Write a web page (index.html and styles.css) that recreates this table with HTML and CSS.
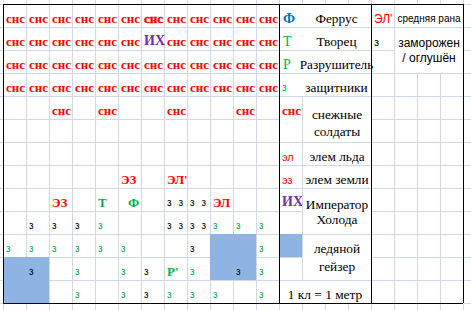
FILE: index.html
```html
<!DOCTYPE html>
<html lang="ru">
<head>
<meta charset="utf-8">
<title>Карта</title>
<link rel="stylesheet" href="styles.css">
</head>
<body>
<div class="sheet">
  <!-- row 0 -->
  <div class="t snc c0 r0">снс</div><div class="t snc c1 r0">снс</div><div class="t snc c2 r0">снс</div><div class="t snc c3 r0">снс</div>
  <div class="t snc c4 r0">снс</div><div class="t snc c5 r0">снс</div><div class="t snc heavy c6 r0">снс</div><div class="t snc c7 r0">снс</div>
  <div class="t snc c8 r0">снс</div><div class="t snc c9 r0">снс</div><div class="t snc c10 r0">снс</div><div class="t snc c11 r0">снс</div>
  <div class="t key blue c12 r0">Ф</div>
  <div class="t lg m ctr c13 r0 w3">Феррус</div>
  <div class="t sans red s12 c16 r0">ЭЛ'</div>
  <div class="t sans s10 m ml ctr c17 r0 w3">средняя рана</div>

  <!-- row 1 -->
  <div class="t snc c0 r1">снс</div><div class="t snc c1 r1">снс</div><div class="t snc c2 r1">снс</div><div class="t snc c3 r1">снс</div>
  <div class="t snc c4 r1">снс</div><div class="t snc c5 r1">снс</div><div class="t ih c6 r1">ИХ</div><div class="t snc c7 r1">снс</div>
  <div class="t snc c8 r1">снс</div><div class="t snc c9 r1">снс</div><div class="t snc c10 r1">снс</div><div class="t snc c11 r1">снс</div>
  <div class="t key green c12 r1">Т</div>
  <div class="t lg m mt ctr c13 r1 w3">Творец</div>
  <div class="t sans s11 c16 r1">з</div>
  <div class="t sans s12 m mt ml ctr mid lh15 c17 r1 w3 h2">заморожен<br>/ оглушён</div>

  <!-- row 2 -->
  <div class="t snc c0 r2">снс</div><div class="t snc c1 r2">снс</div><div class="t snc c2 r2">снс</div><div class="t snc c3 r2">снс</div>
  <div class="t snc c4 r2">снс</div><div class="t snc c5 r2">снс</div><div class="t snc c6 r2">снс</div><div class="t snc c7 r2">снс</div>
  <div class="t snc c8 r2">снс</div><div class="t snc c9 r2">снс</div><div class="t snc c10 r2">снс</div><div class="t snc c11 r2">снс</div>
  <div class="t key green c12 r2">Р</div>
  <div class="t lg m mt ctr c13 r2 w3">Разрушитель</div>

  <!-- row 3 -->
  <div class="t snc c0 r3">снс</div><div class="t snc c1 r3">снс</div><div class="t snc c2 r3">снс</div><div class="t snc c3 r3">снс</div>
  <div class="t snc c4 r3">снс</div><div class="t snc c5 r3">снс</div><div class="t snc c6 r3">снс</div><div class="t snc c7 r3">снс</div>
  <div class="t snc c8 r3">снс</div><div class="t snc c9 r3">снс</div><div class="t snc c10 r3">снс</div><div class="t snc c11 r3">снс</div>
  <div class="t z green c12 r3">з</div>
  <div class="t lg m mt ctr c13 r3 w3">защитники</div>

  <!-- row 4-5 -->
  <div class="t snc c2 r4">снс</div><div class="t snc c4 r4">снс</div><div class="t snc c7 r4">снс</div><div class="t snc c10 r4">снс</div>
  <div class="t snc m mt top c12 r4 h2">снс</div>
  <div class="t lg m mt ml ctr lh165 pb2 c13 r4 w3 h2">снежные<br>солдаты</div>

  <!-- row 6 -->
  <div class="t lab c12 r6">эл</div>
  <div class="t lg m mt ml ctr c13 r6 w3">элем льда</div>

  <!-- row 7 -->
  <div class="t ab c5 r7">ЭЗ</div>
  <div class="t ab c7 r7">ЭЛ'</div>
  <div class="t lab c12 r7">эз</div>
  <div class="t lg m mt ml ctr c13 r7 w3">элем земли</div>

  <!-- row 8 -->
  <div class="t ab c2 r8">ЭЗ</div>
  <div class="t gb c4 r8">Т</div>
  <div class="t gb pf c5 r8">Ф</div>
  <div class="t z zz c7 r8"><span>з</span><span>з</span></div>
  <div class="t z zz c8 r8"><span>з</span><span>з</span></div>
  <div class="t ab c9 r8">ЭЛ</div>
  <div class="t ih c12 r8">ИХ</div>
  <div class="t lg m mt ml ctr mid lh15 c13 r8 w3 h2">Император<br>Холода</div>

  <!-- row 9 -->
  <div class="t z c1 r9">з</div><div class="t z c2 r9">з</div><div class="t z c3 r9">з</div><div class="t z green c4 r9">з</div>
  <div class="t z zz c7 r9"><span>з</span><span>з</span></div>
  <div class="t z zz c8 r9"><span>з</span><span>з</span></div>
  <div class="t z green c9 r9">з</div><div class="t z green c10 r9">з</div><div class="t z green c11 r9">з</div>

  <!-- row 10 -->
  <div class="t z green c0 r10">з</div><div class="t z green c1 r10">з</div><div class="t z green c2 r10">з</div>
  <div class="t z green c3 r10">з</div><div class="t z green c4 r10">з</div><div class="t z green c5 r10">з</div>
  <div class="t z c8 r10">з</div>
  <div class="fill c9 r10 w2 h2"></div>
  <div class="t z green c11 r10">з</div>
  <div class="fill c12 r10"></div>
  <div class="t lg m mt ml ctr mid lh18 c13 r10 w3 h2">ледяной<br>гейзер</div>

  <!-- row 11 -->
  <div class="fill c0 r11 w2 h2"></div>
  <div class="t z c1 r11">з</div>
  <div class="t z green c3 r11">з</div><div class="t z green c5 r11">з</div><div class="t z c6 r11">з</div>
  <div class="t gb c7 r11">Р'</div>
  <div class="t z green c8 r11">з</div>
  <div class="t z c10 r11">з</div>
  <div class="t z green c11 r11">з</div>

  <!-- row 12 -->
  <div class="t z green c3 r12">з</div><div class="t z green c5 r12">з</div><div class="t z c6 r12">з</div>
  <div class="t z green c7 r12">з</div><div class="t z green c8 r12">з</div><div class="t z green c9 r12">з</div>
  <div class="t z green c11 r12">з</div>
  <div class="t lg m mt ctr c12 r12 w4">1 кл = 1 метр</div>

  <!-- thick borders -->
  <div class="vl c0"></div>
  <div class="vl c12"></div>
  <div class="vl c16"></div>
  <div class="vl c20"></div>
  <div class="hl r0"></div>
  <div class="hl r13"></div>
</div>
</body>
</html>
```

FILE: styles.css
```css
* { box-sizing: border-box; }

html, body {
  margin: 0;
  padding: 0;
  background: #fff;
  overflow: hidden;
}

body {
  width: 471px;
  height: 310px;
}

.sheet {
  display: grid;
  grid-template-columns: 3px repeat(20, 23px) 8px;
  grid-template-rows: 4px repeat(13, 23px) 7px;
  width: 471px;
  height: 310px;
  background-color: #fff;
  background-image:
    repeating-linear-gradient(90deg, transparent 0 3px, #D0D7E5 3px 4px, transparent 4px 23px),
    repeating-linear-gradient(180deg, transparent 0 4px, #D0D7E5 4px 5px, transparent 5px 23px);
}

/* placement */
.c0 { grid-column: 2; }  .c1 { grid-column: 3; }  .c2 { grid-column: 4; }  .c3 { grid-column: 5; }
.c4 { grid-column: 6; }  .c5 { grid-column: 7; }  .c6 { grid-column: 8; }  .c7 { grid-column: 9; }
.c8 { grid-column: 10; } .c9 { grid-column: 11; } .c10 { grid-column: 12; } .c11 { grid-column: 13; }
.c12 { grid-column: 14; } .c13 { grid-column: 15; } .c16 { grid-column: 18; } .c17 { grid-column: 19; }
.c20 { grid-column: 22; }

.r0 { grid-row: 2; }  .r1 { grid-row: 3; }  .r2 { grid-row: 4; }  .r3 { grid-row: 5; }
.r4 { grid-row: 6; }  .r5 { grid-row: 7; }  .r6 { grid-row: 8; }  .r7 { grid-row: 9; }
.r8 { grid-row: 10; } .r9 { grid-row: 11; } .r10 { grid-row: 12; } .r11 { grid-row: 13; }
.r12 { grid-row: 14; } .r13 { grid-row: 15; }

.w2 { grid-column-end: span 2; }
.w3 { grid-column-end: span 3; }
.w4 { grid-column-end: span 4; }
.h2 { grid-row-end: span 2; }

/* cells */
.t {
  display: flex;
  align-items: flex-end;
  padding-left: 3px;
  white-space: nowrap;
  line-height: 16px;
  min-width: 0;
}
.ctr { justify-content: center; text-align: center; padding-left: 0; }
.mid { align-items: center; }
.top { align-items: flex-start; padding-top: 6px; }
.pb2 { padding-bottom: 2px; }
.pf { padding-left: 10px; }
.lh15 { line-height: 15px; }
.lh165 { line-height: 16.5px; }
.lh18 { line-height: 18px; }

.m { background-color: #fff; }
.mt { border-top: 1px solid #D0D7E5; }
.ml { border-left: 1px solid #D0D7E5; }
.fill { background-color: #8DB4E2; }

/* text styles */
.snc {
  font-family: "Liberation Serif", serif;
  font-weight: bold;
  font-size: 13px;
  color: #ff0000;
}
.heavy { -webkit-text-stroke: 0.35px #ff0000; }

.ih {
  font-family: "Liberation Serif", serif;
  font-weight: bold;
  font-size: 14px;
  color: #7030A0;
  padding-bottom: 1px;
}
.ab {
  font-family: "Liberation Serif", serif;
  font-weight: bold;
  font-size: 12.5px;
  color: #ff0000;
}
.gb {
  font-family: "Liberation Serif", serif;
  font-weight: bold;
  font-size: 13px;
  color: #00B050;
}
.z {
  font-family: "Liberation Sans", sans-serif;
  font-size: 10px;
  color: #000;
}
.zz { gap: 7px; }
.lab {
  font-family: "Liberation Sans", sans-serif;
  font-size: 11px;
  color: #ff0000;
}
.key {
  font-family: "Liberation Serif", serif;
  font-size: 14px;
  padding-left: 4px;
}
.lg {
  font-family: "Liberation Serif", serif;
  font-size: 13.33px;
  color: #000;
}
.sans { font-family: "Liberation Sans", sans-serif; color: #000; }
.s10 { font-size: 10px; }
.s11 { font-size: 11px; }
.s12 { font-size: 12px; }

.red { color: #ff0000; }
.green { color: #00B050; }
.blue { color: #0070C0; font-weight: bold; }

/* thick borders */
.vl {
  grid-row: 2 / 15;
  border-left: 1px solid #000;
  z-index: 2;
}
.hl {
  grid-column: 2 / 22;
  border-top: 1px solid #000;
  z-index: 2;
}
```
